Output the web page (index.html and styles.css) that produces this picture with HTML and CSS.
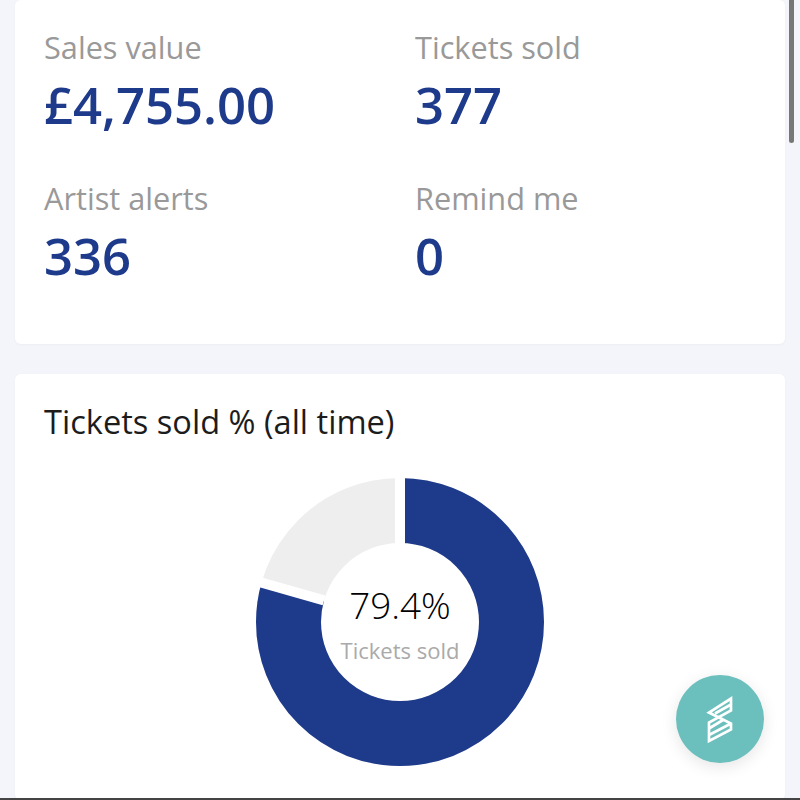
FILE: index.html
```html
<!DOCTYPE html>
<html lang="en">
  <head>
    <meta charset="UTF-8" />
    <meta name="viewport" content="width=device-width, initial-scale=1.0" />
    <title>Dashboard</title>

    <link rel="stylesheet" href="styles.css">
  </head>
  <body>
    <div class="page">
      <!-- Totals -->
      <section class="card stats">
        <div class="stat">
          <p class="stat-label">Sales value</p>
          <p class="stat-value">£4,755.00</p>
        </div>
        <div class="stat">
          <p class="stat-label">Tickets sold</p>
          <p class="stat-value">377</p>
        </div>
        <div class="stat">
          <p class="stat-label">Artist alerts</p>
          <p class="stat-value">336</p>
        </div>
        <div class="stat">
          <p class="stat-label">Remind me</p>
          <p class="stat-value">0</p>
        </div>
      </section>

      <!-- Donut -->
      <section class="card chart-card">
        <h2 class="chart-title">Tickets sold % (all time)</h2>
        <div class="donut">
          <svg width="288" height="288" viewBox="-144 -144 288 288">
            <circle class="donut-rest" r="111.5" />
            <circle class="donut-sold" r="111.5" pathLength="100" stroke-dasharray="79.4 20.6" transform="rotate(-90)" />
            <line class="donut-gap" x1="0" y1="-60" x2="0" y2="-150" />
            <line class="donut-gap" x1="-76" y1="-21.6" x2="-144" y2="-41" />
          </svg>
          <div class="donut-text">
            <div class="donut-percent">79.4%</div>
            <div class="donut-label">Tickets sold</div>
          </div>
        </div>
      </section>
    </div>

    <div class="scroll-thumb"></div>

    <button class="fab" type="button" aria-label="Help">
      <svg width="28" height="48" viewBox="706 695 28 48">
        <path d="M731 698.5V710.5L709 722.5V741L731 729.5V723.5L709 712.5ZM731 704.5L715 713.5M731 723.5L709 735M723 720L709 728.5" fill="none" stroke="#fff" stroke-width="2.7" />
      </svg>
    </button>

    <div class="bottom-line"></div>
  </body>
</html>
```

FILE: styles.css
```css
/* General Styling */
html,
body {
  height: 100%;
}

body {
  font-family: "Open Sans", Arial, sans-serif;
  margin: 0;
  background-color: #f3f5fa;
  overflow: hidden;
}

.page {
  display: flex;
  flex-direction: column;
  gap: 30px;
  padding: 0 15px;
  height: 800px;
}

.card {
  background: #fff;
  border-radius: 6px;
  box-shadow: 0px 1px 3px rgba(30, 40, 90, 0.03);
}

/* Stats */
.stats {
  height: 344px;
  box-sizing: border-box;
  padding: 25px 29px 0;
  display: grid;
  grid-template-columns: 371px 1fr;
  grid-auto-rows: 151px;
  align-content: start;
}

.stat-label {
  margin: 0;
  font-size: 30.7px;
  line-height: 44px;
  color: #999;
}

.stat-value {
  margin: 2px 0 0;
  font-size: 50.8px;
  line-height: 68px;
  font-weight: 600;
  color: #1e3a8a;
}

/* Chart */
.chart-card {
  flex: 1;
  padding: 26px 29px 0;
  overflow: hidden;
}

.chart-title {
  margin: 0;
  font-size: 32.6px;
  line-height: 44px;
  font-weight: 400;
  color: #1c1c1c;
}

.donut {
  position: relative;
  width: 288px;
  height: 288px;
  margin: 34px auto 0;
}

.donut svg {
  display: block;
}

.donut circle {
  fill: none;
  stroke-width: 65;
}

.donut-rest {
  stroke: #eeeeee;
}

.donut-sold {
  stroke: #1e3a8a;
}

.donut-gap {
  stroke: #fff;
  stroke-width: 10;
}

.donut-text {
  position: absolute;
  top: 101px;
  left: 0;
  right: 0;
  text-align: center;
}

.donut-percent {
  font-size: 36.8px;
  line-height: 52px;
  font-weight: 300;
  color: #000;
}

.donut-label {
  font-size: 22px;
  line-height: 32px;
  margin-top: 3px;
  color: #aaa;
}

/* Overlays */
.scroll-thumb {
  position: fixed;
  top: 0;
  left: 789px;
  width: 5px;
  height: 143px;
  background: #777;
  border-radius: 0 0 3px 3px;
}

.fab {
  position: fixed;
  left: 676px;
  top: 675px;
  width: 88px;
  height: 88px;
  padding: 0;
  border: none;
  border-radius: 50%;
  background-color: #6bbfbc;
  box-shadow: 0px 4px 16px rgba(0, 0, 0, 0.1);
  display: flex;
  align-items: center;
  justify-content: center;
}

.fab svg {
  display: block;
}

.bottom-line {
  position: fixed;
  left: 0;
  right: 0;
  bottom: 0;
  height: 2px;
  background: #444;
}
```
